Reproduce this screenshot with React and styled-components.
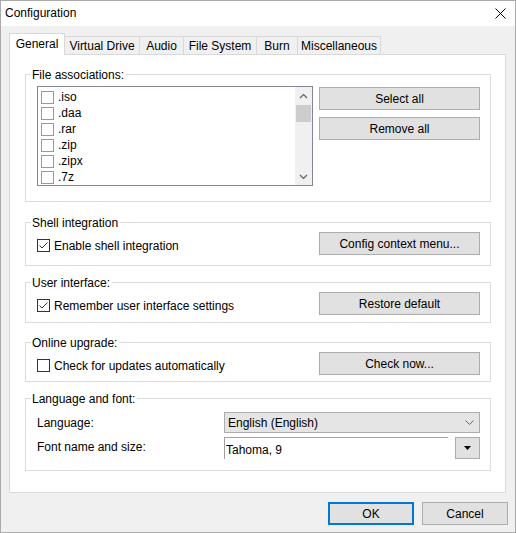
import React from 'react';
import styled, { createGlobalStyle } from 'styled-components';

const Global = createGlobalStyle`
  html, body { margin: 0; padding: 0; background: #f0f0f0; }
  * { box-sizing: border-box; }
  body {
    font-family: "Liberation Sans", Arial, sans-serif;
    font-size: 12px;
    color: #000;
  }
`;

const Window = styled.div`
  width: 516px;
  height: 533px;
  border: 1px solid #aaaaaa;
  background: #f0f0f0;
  display: flex;
  flex-direction: column;
`;

const TitleBar = styled.div`
  height: 25px;
  flex: none;
  background: #fff;
  display: flex;
  align-items: center;
  justify-content: space-between;
  padding: 0 9px 0 4px;
  line-height: 25px;
`;

const TabStrip = styled.div`
  position: relative;
  z-index: 1;
  margin-top: 7px;
  height: 22px;
  flex: none;
  padding-left: 8px;
  display: flex;
  align-items: flex-end;
`;

const Tab = styled.div`
  width: ${p => p.$w}px;
  height: ${p => (p.$active ? 22 : 18)}px;
  margin-bottom: ${p => (p.$active ? 0 : 1)}px;
  background: ${p => (p.$active ? '#fff' : '#f0f0f0')};
  border-top: 1px solid #d9d9d9;
  border-right: 1px solid #d9d9d9;
  border-left: ${p => (p.$active ? '1px solid #d9d9d9' : '0')};
  display: flex;
  align-items: center;
  justify-content: center;
  padding-bottom: ${p => (p.$active ? 2 : 0)}px;
  white-space: nowrap;
`;

const Panel = styled.div`
  margin: -1px 9px 0 8px;
  height: 439px;
  flex: none;
  border: 1px solid #d9d9d9;
  background: #fff;
  padding: 19px 14px 0 15px;
  display: flex;
  flex-direction: column;
`;

const Group = styled.div`
  border: 1px solid #dcdcdc;
  margin-top: ${p => p.$mt || 0}px;
  padding: 0 10px ${p => p.$pb}px 11px;
  display: flex;
  flex-direction: column;
`;

const GroupTitle = styled.div`
  align-self: flex-start;
  margin: -8px 0 0 -6px;
  padding: 2px 2px 0 1px;
  height: 15px;
  line-height: 13px;
  background: #fff;
  white-space: nowrap;
`;

const AssocRow = styled.div`
  display: flex;
  align-items: flex-start;
  gap: 6px;
  margin-top: 4px;
`;

const ListBox = styled.div`
  width: 276px;
  height: 100px;
  border: 1px solid #828790;
  background: #fff;
  display: flex;
`;

const ListItems = styled.div`
  flex: 1;
  padding: 2px 0 0 3px;
  overflow: hidden;
`;

const ListItem = styled.div`
  height: 16px;
  display: flex;
  align-items: center;
  gap: 4px;
`;

const Scrollbar = styled.div`
  width: 17px;
  background: #f0f0f0;
  display: flex;
  flex-direction: column;
`;

const ScrollArrow = styled.div`
  height: 17px;
  flex: none;
  display: flex;
  align-items: center;
  justify-content: center;
`;

const Thumb = styled.div`
  margin: 1px 1px 0;
  height: 17px;
  background: #cdcdcd;
`;

const Spacer = styled.div`
  flex: 1;
`;

const ButtonColumn = styled.div`
  display: flex;
  flex-direction: column;
  gap: 7px;
  margin-top: 1px;
`;

const Button = styled.button`
  width: ${p => p.$w || 161}px;
  height: 23px;
  margin: ${p => p.$mt || 0}px 0 0;
  padding: 0;
  background: #e1e1e1;
  border: ${p => (p.$default ? '2px solid #0078d7' : '1px solid #adadad')};
  font-family: "Liberation Sans", Arial, sans-serif;
  font-size: 12px;
  color: #000;
  white-space: nowrap;
  flex: none;
`;

const OptionRow = styled.div`
  display: flex;
  justify-content: space-between;
  align-items: flex-start;
`;

const CheckLabel = styled.label`
  display: flex;
  align-items: center;
  gap: 4px;
  margin-top: ${p => p.$mt || 0}px;
  height: 13px;
  white-space: nowrap;
`;

const Box = styled.span`
  width: 13px;
  height: 13px;
  flex: none;
  border: 1px solid ${p => (p.$light ? '#9a9a9a' : '#333')};
  background: #fff;
  display: flex;
  align-items: center;
  justify-content: center;
`;

const FormGrid = styled.div`
  display: grid;
  grid-template-columns: 187px 256px;
  grid-template-rows: 21px 22px;
  row-gap: 4px;
  margin-top: 6px;
  align-items: center;
`;

const FieldLabel = styled.div`
  white-space: nowrap;
  margin-top: ${p => p.$mt || 0}px;
`;

const Select = styled.div`
  height: 21px;
  background: #e5e5e5;
  border: 1px solid #adadad;
  display: flex;
  align-items: center;
  justify-content: space-between;
  padding: 0 5px 0 3px;
`;

const FontRow = styled.div`
  height: 22px;
  display: flex;
  justify-content: space-between;
`;

const FontInput = styled.div`
  width: 224px;
  height: 22px;
  border-top: 1px solid #a0a0a0;
  border-left: 1px solid #a0a0a0;
  padding: 3px 0 0 1px;
  display: flex;
  align-items: center;
`;

const DropButton = styled.div`
  width: 25px;
  height: 22px;
  background: #e1e1e1;
  border: 1px solid #adadad;
  display: flex;
  align-items: center;
  justify-content: center;
`;

const Footer = styled.div`
  display: flex;
  justify-content: flex-end;
  gap: 8px;
  padding: 9px 7px 0 0;
`;

const Check = ({ checked, light }) => (
  <Box $light={light}>
    {checked && (
      <svg width="11" height="11" viewBox="0 0 11 11">
        <polyline points="1.5,5.5 4,8 9.5,2.5" fill="none" stroke="#333" strokeWidth="1" />
      </svg>
    )}
  </Box>
);

const CloseIcon = () => (
  <svg width="11" height="11" viewBox="0 0 11 11">
    <path d="M0.5 0.5 L10.5 10.5 M10.5 0.5 L0.5 10.5" stroke="#000" strokeWidth="1" />
  </svg>
);

const tabs = [
  { label: 'General', w: 56, active: true },
  { label: 'Virtual Drive', w: 75 },
  { label: 'Audio', w: 44 },
  { label: 'File System', w: 73 },
  { label: 'Burn', w: 41 },
  { label: 'Miscellaneous', w: 83 },
];

const exts = ['.iso', '.daa', '.rar', '.zip', '.zipx', '.7z'];

export default function App() {
  return (
    <>
      <Global />
      <Window>
        <TitleBar>
          <span>Configuration</span>
          <CloseIcon />
        </TitleBar>
        <TabStrip>
          {tabs.map(t => (
            <Tab key={t.label} $w={t.w} $active={t.active}>{t.label}</Tab>
          ))}
        </TabStrip>
        <Panel>
          <Group $pb={15}>
            <GroupTitle>File associations:</GroupTitle>
            <AssocRow>
              <ListBox>
                <ListItems>
                  {exts.map(e => (
                    <ListItem key={e}>
                      <Check light />
                      <span>{e}</span>
                    </ListItem>
                  ))}
                </ListItems>
                <Scrollbar>
                  <ScrollArrow>
                    <svg width="9" height="6" viewBox="0 0 9 6">
                      <polyline points="1,5 4.5,1.5 8,5" fill="none" stroke="#606060" strokeWidth="1.2" />
                    </svg>
                  </ScrollArrow>
                  <Thumb />
                  <Spacer />
                  <ScrollArrow>
                    <svg width="9" height="6" viewBox="0 0 9 6">
                      <polyline points="1,1 4.5,4.5 8,1" fill="none" stroke="#606060" strokeWidth="1.2" />
                    </svg>
                  </ScrollArrow>
                </Scrollbar>
              </ListBox>
              <ButtonColumn>
                <Button>Select all</Button>
                <Button>Remove all</Button>
              </ButtonColumn>
            </AssocRow>
          </Group>

          <Group $mt={20} $pb={10}>
            <GroupTitle>Shell integration</GroupTitle>
            <OptionRow>
              <CheckLabel $mt={9}>
                <Check checked />
                <span>Enable shell integration</span>
              </CheckLabel>
              <Button $mt={2}>Config context menu...</Button>
            </OptionRow>
          </Group>

          <Group $mt={16} $pb={7}>
            <GroupTitle>User interface:</GroupTitle>
            <OptionRow>
              <CheckLabel $mt={9}>
                <Check checked />
                <span>Remember user interface settings</span>
              </CheckLabel>
              <Button $mt={2}>Restore default</Button>
            </OptionRow>
          </Group>

          <Group $mt={19} $pb={6}>
            <GroupTitle>Online upgrade:</GroupTitle>
            <OptionRow>
              <CheckLabel $mt={9}>
                <Check />
                <span>Check for updates automatically</span>
              </CheckLabel>
              <Button $mt={2}>Check now...</Button>
            </OptionRow>
          </Group>

          <Group $mt={16} $pb={11}>
            <GroupTitle>Language and font:</GroupTitle>
            <FormGrid>
              <FieldLabel>Language:</FieldLabel>
              <Select>
                <span>English (English)</span>
                <svg width="9" height="5" viewBox="0 0 9 5">
                  <polyline points="0.5,0.5 4.5,4.5 8.5,0.5" fill="none" stroke="#6a6a6a" strokeWidth="1" />
                </svg>
              </Select>
              <FieldLabel $mt={-3}>Font name and size:</FieldLabel>
              <FontRow>
                <FontInput>Tahoma, 9</FontInput>
                <DropButton>
                  <svg width="7" height="4" viewBox="0 0 7 4">
                    <polygon points="0,0 7,0 3.5,4" fill="#000" />
                  </svg>
                </DropButton>
              </FontRow>
            </FormGrid>
          </Group>
        </Panel>
        <Footer>
          <Button $w={86} $default>OK</Button>
          <Button $w={86}>Cancel</Button>
        </Footer>
      </Window>
    </>
  );
}
